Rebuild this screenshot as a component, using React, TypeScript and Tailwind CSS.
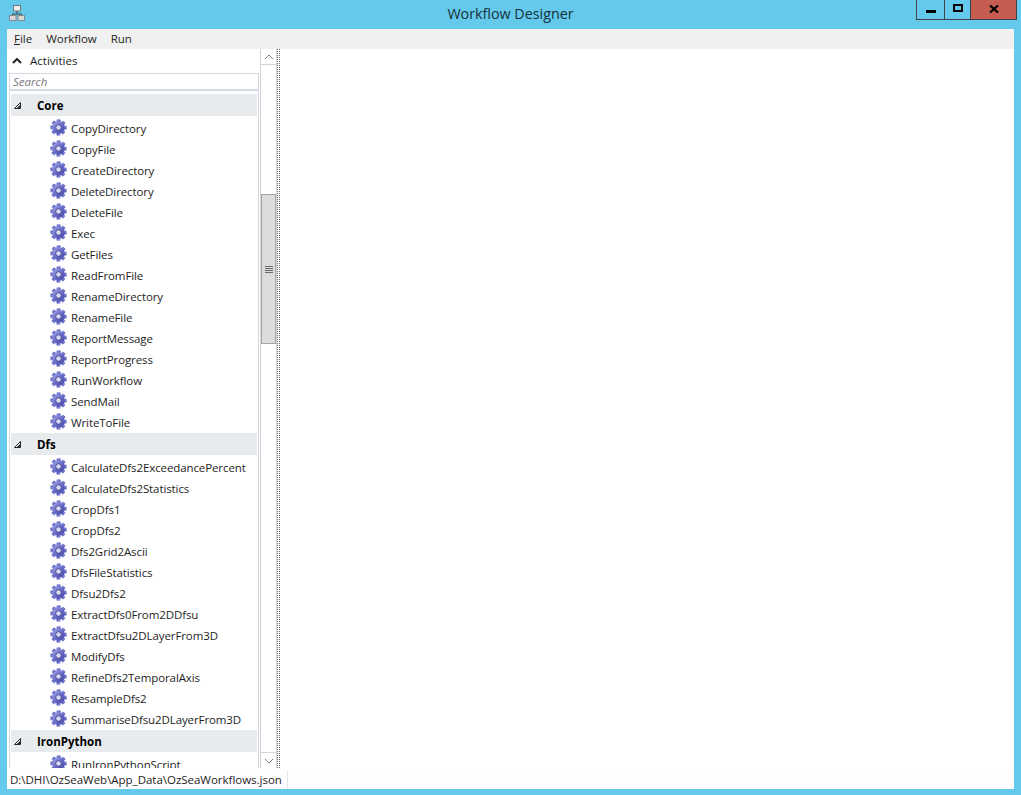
const groups = [
  {
    name: "Core",
    items: [
      "CopyDirectory",
      "CopyFile",
      "CreateDirectory",
      "DeleteDirectory",
      "DeleteFile",
      "Exec",
      "GetFiles",
      "ReadFromFile",
      "RenameDirectory",
      "RenameFile",
      "ReportMessage",
      "ReportProgress",
      "RunWorkflow",
      "SendMail",
      "WriteToFile",
    ],
  },
  {
    name: "Dfs",
    items: [
      "CalculateDfs2ExceedancePercent",
      "CalculateDfs2Statistics",
      "CropDfs1",
      "CropDfs2",
      "Dfs2Grid2Ascii",
      "DfsFileStatistics",
      "Dfsu2Dfs2",
      "ExtractDfs0From2DDfsu",
      "ExtractDfsu2DLayerFrom3D",
      "ModifyDfs",
      "RefineDfs2TemporalAxis",
      "ResampleDfs2",
      "SummariseDfsu2DLayerFrom3D",
    ],
  },
  { name: "IronPython", items: ["RunIronPythonScript"] },
]

function GearIcon() {
  return (
    <svg width="17" height="17" viewBox="0 0 16 16" className="shrink-0 -translate-y-px">
      <defs>
        <linearGradient id="gear" x1="0" y1="0" x2="1" y2="1">
          <stop offset="0" stopColor="#a4a8e6" />
          <stop offset="0.55" stopColor="#6468c4" />
          <stop offset="1" stopColor="#44489e" />
        </linearGradient>
      </defs>
      <g fill="url(#gear)">
        {[0, 45, 90, 135, 180, 225, 270, 315].map((deg) => (
          <rect key={deg} x="6.1" y="0.2" width="3.8" height="4" rx="1" transform={`rotate(${deg} 8 8)`} />
        ))}
        <circle cx="8" cy="8" r="5.8" />
      </g>
      <circle cx="8" cy="8" r="2.6" fill="#d9daf5" stroke="#3a3e8c" strokeWidth="0.8" />
    </svg>
  )
}

function AppIcon() {
  return (
    <svg width="16" height="16" viewBox="0 0 16 16">
      <path d="M8 6v3M3.5 11V9h9v2" fill="none" stroke="#3f4a55" strokeWidth="1.2" />
      <rect x="4.5" y="0.5" width="7" height="5.5" fill="#eeeeee" stroke="#74787c" />
      <rect x="0.5" y="10.5" width="6.5" height="5" fill="#d8d8d8" stroke="#85898d" />
      <rect x="9" y="10.5" width="6.5" height="5" fill="#d8d8d8" stroke="#85898d" />
    </svg>
  )
}

function TreeArrow() {
  return (
    <svg width="7" height="7" viewBox="0 0 7 7" className="shrink-0">
      <path d="M6.5 0.5v6h-6z" fill="#fff" stroke="#262626" />
      <path d="M6 3v3H3z" fill="#262626" />
    </svg>
  )
}

function SmallChevron({ down, color, width }: { down?: boolean; color: string; width: number }) {
  return (
    <svg width="10" height="6" viewBox="0 0 10 6" className="shrink-0">
      <path d={down ? "M1 1l4 4 4-4" : "M1 5l4-4 4 4"} fill="none" stroke={color} strokeWidth={width} />
    </svg>
  )
}

function WindowButtons() {
  return (
    <div className="flex h-[20px] justify-self-end border border-t-0 border-[#3c4348]">
      <div className="flex w-[28px] items-end justify-center border-r border-[#3c4348] pb-[6px]">
        <div className="h-[3px] w-[10px] bg-black" />
      </div>
      <div className="flex w-[26px] items-center justify-center border-r border-[#3c4348] pb-[3px]">
        <div className="h-[8px] w-[10px] border-2 border-black" />
      </div>
      <div className="flex w-[45px] items-center justify-center bg-[#c75c50] pb-[2px]">
        <svg width="10" height="8" viewBox="0 0 10 8">
          <path d="M1 0.5l8 7M9 0.5l-8 7" stroke="#000" strokeWidth="2.2" fill="none" />
        </svg>
      </div>
    </div>
  )
}

export default function App() {
  return (
    <div
      className="flex h-[795px] w-[1021px] flex-col overflow-hidden bg-[#64c9eb] px-[7px] pb-[6px] text-[11.5px] text-[#1e1e1e]"
      style={{ fontFamily: "'Open Sans', 'Noto Sans', sans-serif" }}
    >
      <header className="grid h-[29px] shrink-0 grid-cols-[1fr_auto_1fr] items-start">
        <div className="pt-[5px] pl-[2px]">
          <AppIcon />
        </div>
        <div className="pt-[5px] text-[14.3px] leading-[18px] text-[#16323d]">Workflow Designer</div>
        <div className="-mr-[3px] flex justify-end">
          <WindowButtons />
        </div>
      </header>

      <div className="flex min-h-0 flex-1 flex-col bg-white">
        <nav className="flex h-[20px] shrink-0 items-center gap-[14px] bg-[#f0f0f0] pl-[7px]">
          <span>
            <span className="underline">F</span>ile
          </span>
          <span className="tracking-[-0.05px]">Workflow</span>
          <span>Run</span>
        </nav>

        <div className="flex min-h-0 flex-1">
          <aside className="flex w-[270px] shrink-0">
            <div className="flex w-[252px] shrink-0 flex-col">
              <div className="flex h-[24px] shrink-0 items-center gap-[8px] pl-[5px]">
                <SmallChevron color="#222" width={2} />
                <span>Activities</span>
              </div>
              <div className="ml-[2px] flex min-h-0 flex-1 flex-col border-x border-[#d3d8e4]">
                <div className="flex h-[18px] shrink-0 items-center border-t border-b-2 border-[#d3d8e4] pt-px pl-[3px] text-[#77797d] italic">
                  Search
                </div>
                <div className="min-h-0 flex-1 overflow-hidden px-px pt-[3px]">
                  {groups.map((group) => (
                    <section key={group.name}>
                      <div className="flex h-[22px] items-center gap-[16px] bg-[#e8ebee] pl-[3px] font-bold text-black">
                        <TreeArrow />
                        <span className="pt-px">{group.name}</span>
                      </div>
                      <ul className="pt-[2px] tracking-[-0.1px]">
                        {group.items.map((item) => (
                          <li key={item} className="flex h-[21px] items-center gap-[4px] pl-[39px]">
                            <GearIcon />
                            <span>{item}</span>
                          </li>
                        ))}
                      </ul>
                    </section>
                  ))}
                </div>
              </div>
            </div>

            <div className="ml-px flex w-[17px] shrink-0 flex-col border-x border-[#d4d4d4] bg-white">
              <div className="flex h-[16px] shrink-0 items-center justify-center border-b border-[#d4d4d4]">
                <SmallChevron color="#808080" width={1} />
              </div>
              <div className="flex min-h-0 flex-1 flex-col pt-[129px] pb-[408px]">
                <div className="flex flex-1 flex-col items-center justify-center gap-px border border-[#a6a6a6] bg-[#dcdcdc]">
                  <div className="h-px w-[8px] bg-[#6a6a6a]" />
                  <div className="h-px w-[8px] bg-[#6a6a6a]" />
                  <div className="h-px w-[8px] bg-[#6a6a6a]" />
                  <div className="h-px w-[8px] bg-[#6a6a6a]" />
                </div>
              </div>
              <div className="flex h-[16px] shrink-0 items-center justify-center border-t border-[#d4d4d4]">
                <SmallChevron down color="#808080" width={1} />
              </div>
            </div>
          </aside>

          <div className="w-[3px] shrink-0 border-x border-dotted border-[#6e6e6e] bg-white" />
          <main className="flex-1 bg-white" />
        </div>

        <footer className="flex h-[21px] shrink-0 items-end bg-[#fffdfd]">
          <span className="flex h-[19px] w-[281px] items-center border-r border-[#e6e4e4] pl-[3px] tracking-[-0.02px]">
            D:\DHI\OzSeaWeb\App_Data\OzSeaWorkflows.json
          </span>
        </footer>
      </div>
    </div>
  )
}
